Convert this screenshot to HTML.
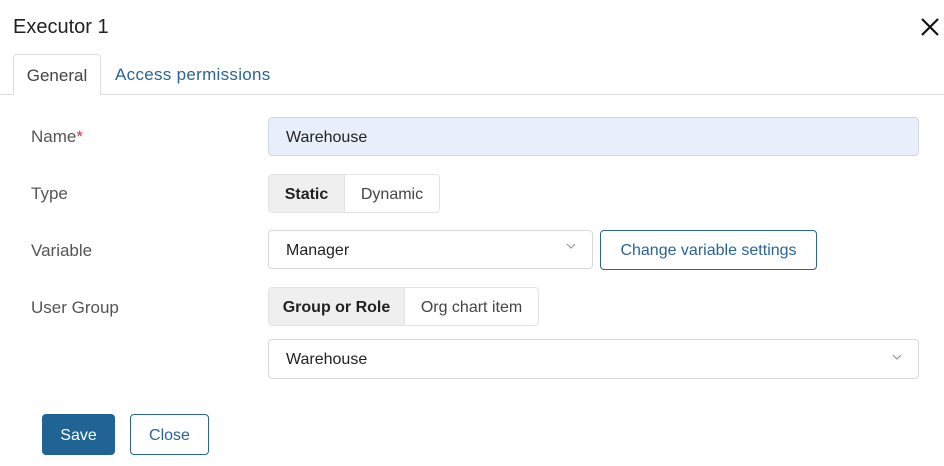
<!DOCTYPE html>
<html><head><style>
body{margin:0;width:944px;height:466px;background:#fff;font-family:"Liberation Sans",sans-serif;position:relative;overflow:hidden}
.a{position:absolute;box-sizing:border-box}
.lbl{position:absolute;left:31px;font-size:17px;color:#555;line-height:20px}
.t{font-size:16px;color:#222;line-height:20px}
.box{border:1px solid #d9d9d9;border-radius:4px;background:#fff}
.seg{display:flex;border:1px solid #e3e3e3;border-radius:4px;overflow:hidden}
.seg div{display:flex;align-items:center;justify-content:center;font-size:16px;color:#444;padding-top:2px}
.seg .on{background:#efefef;font-weight:bold;color:#222;border-right:1px solid #e3e3e3}
</style></head><body>
<div class="a" style="left:13px;top:15px;font-size:20px;color:#222;line-height:24px">Executor 1</div>
<svg class="a" style="left:920px;top:17px" width="20" height="20" viewBox="0 0 20 20"><path d="M2 2L18 18M18 2L2 18" stroke="#111" stroke-width="2.2"/></svg>
<div class="a" style="left:0;top:94px;width:944px;height:1px;background:#dcdcdc"></div>
<div class="a" style="left:13px;top:54px;width:88px;height:41px;border:1px solid #dcdcdc;border-bottom:none;border-radius:4px 4px 0 0;background:#fff;font-size:17px;color:#444;text-align:center;line-height:41px">General</div>
<div class="a" style="left:115px;top:65px;font-size:17px;letter-spacing:0.3px;color:#2a6496;line-height:20px">Access permissions</div>

<div class="lbl" style="top:127px">Name<span style="color:#d33">*</span></div>
<div class="a" style="left:268px;top:117px;width:651px;height:39px;background:#e8effa;border:1px solid #cfd8e6;border-radius:4px;padding-left:17px;line-height:39px" ><span class="t">Warehouse</span></div>

<div class="lbl" style="top:184px">Type</div>
<div class="a seg" style="left:268px;top:174px;width:172px;height:39px"><div class="on" style="width:75px">Static</div><div style="flex:1">Dynamic</div></div>

<div class="lbl" style="top:241px">Variable</div>
<div class="a box" style="left:268px;top:230px;width:325px;height:39px;padding-left:17px;line-height:39px"><span class="t">Manager</span>
<svg class="a" style="right:16px;top:12px" width="10" height="6" viewBox="0 0 10 6"><path d="M1 1L5 5L9 1" stroke="#999" fill="none" stroke-width="1.2"/></svg></div>
<div class="a" style="left:600px;top:230px;width:217px;height:40px;border:1.5px solid #2a6496;border-radius:4px;color:#2a6496;font-size:16px;text-align:center;line-height:39px">Change variable settings</div>

<div class="lbl" style="top:298px">User Group</div>
<div class="a seg" style="left:268px;top:287px;width:271px;height:39px"><div class="on" style="width:135px">Group or Role</div><div style="flex:1">Org chart item</div></div>

<div class="a box" style="left:268px;top:339px;width:651px;height:40px;padding-left:17px;line-height:40px"><span class="t">Warehouse</span>
<svg class="a" style="right:16px;top:14px" width="10" height="6" viewBox="0 0 10 6"><path d="M1 1L5 5L9 1" stroke="#999" fill="none" stroke-width="1.2"/></svg></div>

<div class="a" style="left:42px;top:414px;width:73px;height:41px;background:#206496;border-radius:4px;color:#fff;font-size:16px;text-align:center;line-height:43px">Save</div>
<div class="a" style="left:130px;top:414px;width:79px;height:41px;border:1px solid #2a6496;border-radius:4px;color:#2a6496;font-size:16px;text-align:center;line-height:41px">Close</div>
</body></html>
